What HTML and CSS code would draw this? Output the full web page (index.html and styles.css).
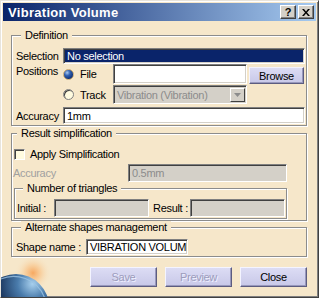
FILE: index.html
```html
<!DOCTYPE html>
<html lang="en">
<head>
    <meta charset="UTF-8">
    <title>Vibration Volume</title>
    <link rel="stylesheet" href="styles.css">
</head>
<body>
    <div class="dialog">
        <div class="titlebar">
            <span class="title">Vibration Volume</span>
            <span class="tbtn">?</span>
            <span class="tbtn">
                <svg width="8" height="7" viewBox="0 0 8 7"><path d="M0 0h2l2 2.5L6 0h2L5 3.5 8 7H6L4 4.5 2 7H0l3-3.5z" fill="#000"/></svg>
            </span>
        </div>

        <svg class="planet" width="60" height="50" viewBox="0 0 60 50">
            <defs>
                <radialGradient id="glow" cx="0.5" cy="0.5" r="0.5">
                    <stop offset="0" stop-color="#f6a860"/>
                    <stop offset="0.45" stop-color="#f8cc98" stop-opacity="0.8"/>
                    <stop offset="1" stop-color="#f6e6c8" stop-opacity="0"/>
                </radialGradient>
                <radialGradient id="earth" cx="0.75" cy="0.15" r="0.9">
                    <stop offset="0" stop-color="#a8d0ee"/>
                    <stop offset="0.25" stop-color="#4a7cac"/>
                    <stop offset="0.55" stop-color="#1e3a62"/>
                    <stop offset="1" stop-color="#0c1830"/>
                </radialGradient>
            </defs>
            <circle cx="32" cy="26" r="18" fill="url(#glow)"/>
            <circle cx="15" cy="60" r="33" fill="url(#earth)"/>
            <path d="M-4 34 A33 33 0 0 1 44 52" fill="none" stroke="#9cc4e4" stroke-width="1.2" opacity="0.8"/>
        </svg>

        <div class="body">
            <div class="group def">
                <div class="cap">Definition</div>
                <div class="row sel-row">
                    <span class="lbl">Selection</span>
                    <div class="field sel">No selection</div>
                </div>
                <div class="row pos-row">
                    <span class="lbl top">Positions</span>
                    <span class="radio on"></span>
                    <span class="opt">File</span>
                    <div class="field file"></div>
                    <div class="btn browse">Browse</div>
                </div>
                <div class="row track-row">
                    <span class="lbl"></span>
                    <span class="radio"></span>
                    <span class="opt">Track</span>
                    <div class="combo">
                        <span class="combo-text">Vibration (Vibration)</span>
                        <span class="arrow"><svg width="7" height="4" viewBox="0 0 7 4"><path d="M0 0h7L3.5 4z" fill="#8c8c8c"/></svg></span>
                    </div>
                </div>
                <div class="row acc-row">
                    <span class="lbl">Accuracy</span>
                    <div class="field acc">1mm</div>
                </div>
            </div>

            <div class="group res">
                <div class="cap">Result simplification</div>
                <div class="row chk-row">
                    <span class="check"></span>
                    <span>Apply Simplification</span>
                </div>
                <div class="row racc-row">
                    <span class="lbl dim">Accuracy</span>
                    <div class="field off">0.5mm</div>
                </div>
                <div class="group sub">
                    <div class="cap">Number of triangles</div>
                    <div class="row tri-row">
                        <span class="lbl">Initial :</span>
                        <div class="field off tri"></div>
                        <span class="lbl2">Result :</span>
                        <div class="field off tri"></div>
                    </div>
                </div>
            </div>

            <div class="group alt">
                <div class="cap">Alternate shapes management</div>
                <div class="row shape-row">
                    <span class="lbl">Shape name :</span>
                    <div class="field shape">VIBRATION VOLUME</div>
                </div>
            </div>

            <div class="buttons">
                <div class="btn big dis">Save</div>
                <div class="btn big dis">Preview</div>
                <div class="btn big">Close</div>
            </div>
        </div>
    </div>
</body>
</html>
```

FILE: styles.css
```css
body { margin: 0; background: #f6e7ca; }
.dialog { position: relative; width: 319px; height: 298px; box-sizing: border-box; overflow: hidden; display: flex; flex-direction: column; padding: 2px; background: #f6e7ca; border: 1px solid; border-color: #e8e4dc #404040 #404040 #e8e4dc; box-shadow: inset 1px 1px 0 #fff, inset -1px -1px 0 #808080; font: 11px "Liberation Sans", Arial, sans-serif; letter-spacing: -0.3px; color: #000; }

.titlebar { height: 18px; display: flex; align-items: center; gap: 2px; padding: 0 2px 0 5px; background: linear-gradient(to right, #0a246a, #a6caf0); }
.title { flex: 1; color: #fff; font-weight: bold; font-size: 13px; letter-spacing: 0.3px; }
.tbtn { width: 16px; height: 14px; box-sizing: border-box; display: flex; align-items: center; justify-content: center; background: #d4d0c8; border: 1px solid; border-color: #fff #404040 #404040 #fff; box-shadow: inset -1px -1px 0 #808080; font-weight: bold; font-size: 11px; }

.body { position: relative; flex: 1; display: flex; flex-direction: column; padding: 14px 9px 0 8px; }

.group { display: flex; flex-direction: column; border: 1px solid #8c8c8c; box-shadow: 1px 1px 0 #fff, inset 1px 1px 0 #fff; }
.cap { align-self: flex-start; height: 13px; line-height: 13px; margin: -7px 0 0 9px; padding: 0 4px; background: #f6e7ca; white-space: nowrap; }
.row { display: flex; align-items: center; white-space: nowrap; }
.lbl { flex: none; }

.field { height: 100%; box-sizing: border-box; display: flex; align-items: center; padding: 0 3px; background: #fff; border: 1px solid; border-color: #808080 #fff #fff #808080; box-shadow: inset 1px 1px 0 #404040, inset -1px -1px 0 #d4d0c8; white-space: nowrap; overflow: hidden; }
.field.off { background: #d4d0c8; color: #8c8c8c; }

/* Definition */
.def { padding-bottom: 1px; }
.def .row { padding: 0 1px 0 4px; }
.def .lbl { width: 47px; }
.sel-row { margin-top: 6px; height: 16px; }
.sel { flex: 1; background: #0a246a; color: #fff; }
.pos-row { height: 20px; align-items: stretch; }
.pos-row .lbl.top { padding-top: 1px; }
.pos-row .radio, .pos-row .opt { align-self: center; }
.track-row { margin-top: 1px; height: 19px; align-items: stretch; }
.track-row .radio, .track-row .opt { align-self: center; }
.radio { flex: none; width: 11px; height: 11px; box-sizing: border-box; border-radius: 50%; background: #fffbe0; border: 1px solid #808080; box-shadow: inset 1px 1px 0 #404040; }
.radio.on { border-color: #c8a870; box-shadow: none; background: radial-gradient(circle at 35% 30%, #a8c8f0 0, #3060b0 35%, #0a2a70 80%); }
.opt { flex: none; width: 39px; padding-left: 6px; box-sizing: border-box; }
.file { width: 134px; flex: none; }
.btn { display: flex; align-items: center; justify-content: center; box-sizing: border-box; background: linear-gradient(#dcdcf4, #c8c8e8); border: 1px solid; border-color: #f4f4ff #5c5c80 #5c5c80 #f4f4ff; box-shadow: inset -1px -1px 0 #9898bc; }
.browse { flex: none; width: 55px; margin: 3px 0 0 2px; }
.combo { width: 134px; flex: none; box-sizing: border-box; display: flex; align-items: stretch; background: #d4d0c8; color: #8c8c8c; border: 1px solid; border-color: #808080 #fff #fff #808080; box-shadow: inset 1px 1px 0 #404040; }
.combo-text { flex: 1; display: flex; align-items: center; padding-left: 3px; white-space: nowrap; overflow: hidden; }
.arrow { width: 15px; margin: 2px 1px 1px 0; box-sizing: border-box; display: flex; align-items: center; justify-content: center; background: #d4d0c8; border: 1px solid; border-color: #fff #404040 #404040 #fff; }
.acc-row { margin-top: 3px; height: 17px; }
.acc { flex: 1; }

/* Result simplification */
.res { margin: 7px 0 0; padding: 0 19px 1px 2px; }
.res > .cap { margin-left: 3px; }
.chk-row { margin-top: 6px; height: 16px; gap: 5px; }
.check { width: 11px; height: 11px; box-sizing: border-box; background: #fffbe0; border: 1px solid; border-color: #808080 #fff #fff #808080; box-shadow: inset 1px 1px 0 #404040; }
.racc-row { margin-top: 2px; height: 18px; }
.racc-row .lbl { width: 115px; margin-left: -1px; }
.racc-row .field { flex: 1; }
.dim { color: #a0a0a0; }
.sub { margin-top: 6px; padding: 0 0 1px 2px; }
.sub > .cap { margin-left: 6px; }
.tri-row { margin-top: 4px; height: 18px; }
.tri-row .lbl { width: 37px; }
.tri { flex: none; width: 95px; }
.lbl2 { flex: none; width: 41px; padding-left: 4px; box-sizing: border-box; }

/* Alternate shapes */
.alt { margin-top: 6px; padding-bottom: 1px; }
.shape-row { margin-top: 5px; height: 16px; padding-left: 4px; }
.shape-row .lbl { width: 70px; }
.shape { flex: none; width: 102px; }

.buttons { display: flex; justify-content: flex-end; gap: 8px; margin-top: 10px; }
.big { width: 67px; height: 20px; }
.dis { color: #9c9cbc; text-shadow: 1px 1px 0 #f0f0ff; }

.planet { position: absolute; left: 0; bottom: 0; }
```
